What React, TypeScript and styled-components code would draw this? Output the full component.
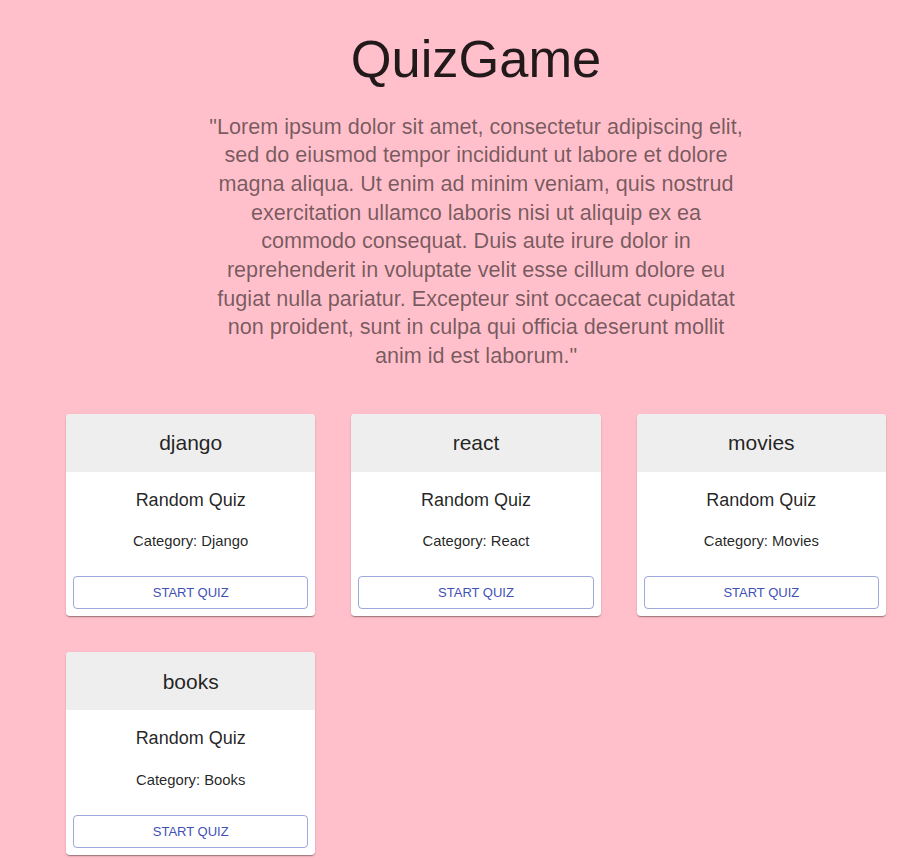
import React from 'react'
import styled, { createGlobalStyle } from 'styled-components'

type Quiz = {
  title: string,
  category: string
}

const quizzes: Quiz[] = [
  { title: 'django', category: 'Django' },
  { title: 'react', category: 'React' },
  { title: 'movies', category: 'Movies' },
  { title: 'books', category: 'Books' },
]

const intro = '"Lorem ipsum dolor sit amet, consectetur adipiscing elit, sed do eiusmod tempor incididunt ut labore et dolore magna aliqua. Ut enim ad minim veniam, quis nostrud exercitation ullamco laboris nisi ut aliquip ex ea commodo consequat. Duis aute irure dolor in reprehenderit in voluptate velit esse cillum dolore eu fugiat nulla pariatur. Excepteur sint occaecat cupidatat non proident, sunt in culpa qui officia deserunt mollit anim id est laborum."'

function QuizCard({ title, category }: Quiz) {
  return (
    <Card>
      <CardHeader>{title}</CardHeader>
      <CardBody>
        <QuizName>Random Quiz</QuizName>
        <Category>Category: {category}</Category>
      </CardBody>
      <CardActions>
        <StartButton>Start Quiz</StartButton>
      </CardActions>
    </Card>
  )
}

function App() {
  return (
    <>
      <GlobalStyle />
      <Page>
        <Title>QuizGame</Title>
        <Intro>{intro}</Intro>
        <QuizGrid>
          {quizzes.map((q) => (
            <QuizCard key={q.title} {...q} />
          ))}
        </QuizGrid>
      </Page>
    </>
  )
}

const GlobalStyle = createGlobalStyle`
  body {
    margin: 0;
    background: #ffc0cb;
    font-family: "Liberation Sans", Arial, sans-serif;
  }
`

const Page = styled.div`
  display: flex;
  flex-direction: column;
  align-items: center;
  padding: 28px 0 40px 32px;
`

const Title = styled.h1`
  margin: 0;
  font-size: 52.4px;
  line-height: 62px;
  font-weight: 400;
  color: rgba(0, 0, 0, 0.87);
`

const Intro = styled.p`
  width: 540px;
  margin: 22.7px 0 0;
  font-size: 21.6px;
  line-height: 28.65px;
  text-align: center;
  color: rgba(0, 0, 0, 0.54);
`

const QuizGrid = styled.div`
  width: 820px;
  margin-top: 43px;
  display: grid;
  grid-template-columns: repeat(3, 1fr);
  column-gap: 36px;
  row-gap: 36px;
`

const Card = styled.div`
  background: #fff;
  border-radius: 4px;
  overflow: hidden;
  color: rgba(0, 0, 0, 0.87);
  box-shadow: 0px 2px 1px -1px rgba(0,0,0,0.2), 0px 1px 1px 0px rgba(0,0,0,0.14), 0px 1px 3px 0px rgba(0,0,0,0.12);
`

const CardHeader = styled.div`
  height: 58px;
  background: #eeeeee;
  display: flex;
  align-items: center;
  justify-content: center;
  font-size: 21px;
  line-height: 25px;
`

const CardBody = styled.div`
  padding: 18px 8px 0;
  text-align: center;
`

const QuizName = styled.div`
  font-size: 18px;
  line-height: 21.6px;
`

const Category = styled.div`
  margin-top: 22px;
  font-size: 14.8px;
  line-height: 17.8px;
`

const CardActions = styled.div`
  padding: 25.5px 7px 7px;
`

const StartButton = styled.button`
  width: 100%;
  height: 33px;
  background: transparent;
  border: 1px solid rgba(63, 81, 181, 0.5);
  border-radius: 4px;
  color: #3f51b5;
  font-family: inherit;
  font-size: 13px;
  text-transform: uppercase;
  cursor: pointer;
`

export default App
